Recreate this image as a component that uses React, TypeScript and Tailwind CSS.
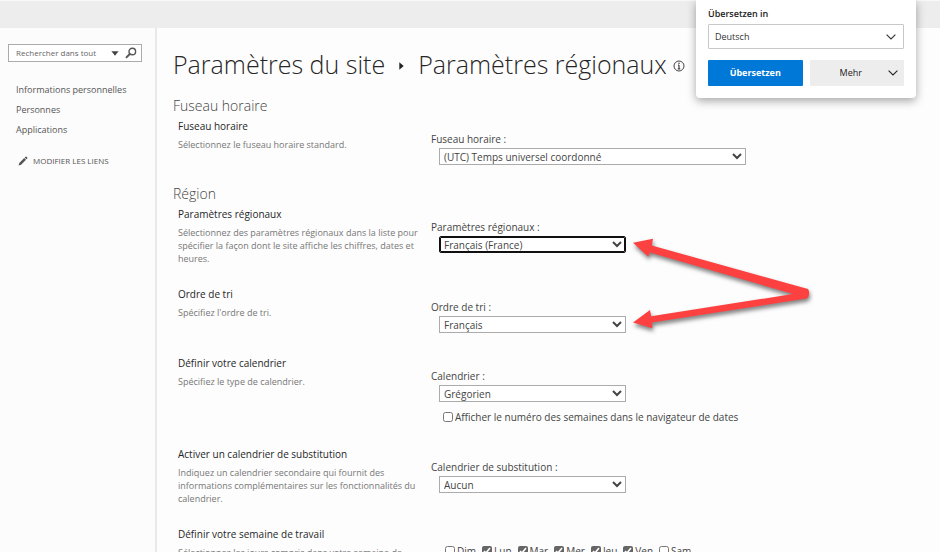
import React, { useState } from "react";

const navLinks = ["Informations personnelles", "Personnes", "Applications"];

const initialDays = [
  { name: "Dim", checked: false },
  { name: "Lun", checked: true },
  { name: "Mar", checked: true },
  { name: "Mer", checked: true },
  { name: "Jeu", checked: true },
  { name: "Ven", checked: true },
  { name: "Sam", checked: false },
];

const SearchIcon = () => (
  <svg viewBox="0 0 12 12" className="h-3 w-3" fill="none" stroke="#555">
    <circle cx="7.3" cy="4.5" r="3.3" strokeWidth="1.4" />
    <path d="M4.8 7L1 10.8" strokeWidth="1.9" />
  </svg>
);

const PencilIcon = () => (
  <svg viewBox="0 0 10 10" className="h-2.5 w-2.5" fill="#555">
    <path d="M0.6 9.4L1.3 6.9L6.2 2L8 3.8L3.1 8.7Z" />
    <path d="M6.7 1.5L7.5 0.7Q8 0.3 8.5 0.8L9.2 1.5Q9.7 2 9.3 2.5L8.5 3.3Z" />
  </svg>
);

const InfoIcon = () => (
  <svg viewBox="0 0 12 12" className="h-3 w-3" fill="none" stroke="#444">
    <circle cx="6" cy="6" r="5" strokeWidth="1" />
    <path d="M6 5V9M5 5.2H6M4.8 8.8H7.2" strokeWidth="1.2" />
    <circle cx="6" cy="3.3" r="0.8" fill="#444" stroke="none" />
  </svg>
);

const Chevron = () => (
  <svg viewBox="0 0 10 6" className="h-1.5 w-2.5" fill="none" stroke="currentColor" strokeWidth="1.1">
    <path d="M0.6 0.6L5 5L9.4 0.6" />
  </svg>
);

type FieldProps = {
  id: string;
  label: string;
  options: string[];
  wide?: boolean;
  focused?: boolean;
};

const SelectField = ({ id, label, options, wide, focused }: FieldProps) => (
  <div className="flex flex-col items-start pt-[13px]">
    <label htmlFor={id} className="text-[10px] leading-4 text-[#444]">{label}</label>
    <select
      id={id}
      className={`mb-px ml-2 mt-px h-[17px] border bg-white text-[10px] text-[#444] ${
        wide ? "w-[307px]" : "w-[187px]"
      } ${
        focused
          ? "rounded-[2px] border-[#101010] outline-1 -outline-offset-2 outline-[#101010]"
          : "rounded-none border-[#ababab]"
      }`}
    >
      {options.map((option) => (
        <option key={option}>{option}</option>
      ))}
    </select>
  </div>
);

type RowProps = {
  title: string;
  description: string;
  children: React.ReactNode;
};

const SettingRow = ({ title, description, children }: RowProps) => (
  <div className="grid grid-cols-[258px_1fr] pb-[21px]">
    <div className="pl-[5px] pr-1">
      <h3 className="text-[10px] leading-4 text-[#262626]">{title}</h3>
      <p className="mt-1 text-[9px] leading-[13px] text-[#777]">{description}</p>
    </div>
    <div>{children}</div>
  </div>
);

const SectionTitle = ({ children }: { children: React.ReactNode }) => (
  <h2 className="pb-[5px] text-[14px] font-light leading-[14px] text-[#444]">{children}</h2>
);

const Sidebar = () => (
  <aside className="w-[157px] shrink-0 border-r-2 border-[#e9e9e9] bg-[#fcfcfc] pt-4">
    <form className="ml-2 mr-[13px] flex h-[18px] items-center border border-[#ababab] bg-white pl-[7px] pr-1">
      <input
        aria-label="Rechercher"
        placeholder="Rechercher dans tout"
        className="min-w-0 flex-1 text-[8px] outline-none placeholder:text-[#666]"
      />
      <button type="button" aria-label="Étendue" className="mr-1.5">
        <svg viewBox="0 0 8 5" className="h-[5px] w-2" fill="#444">
          <path d="M0.4 0.2H7.6L4 4.8Z" />
        </svg>
      </button>
      <button type="button" aria-label="Lancer la recherche">
        <SearchIcon />
      </button>
    </form>
    <nav className="mt-5 flex flex-col gap-1 pl-4 text-[9px] leading-4 text-[#555]">
      {navLinks.map((link) => (
        <a key={link} href="#">{link}</a>
      ))}
    </nav>
    <a href="#" className="mt-[15px] flex items-center gap-[5px] pl-[18px] text-[8px] leading-4 text-[#555]">
      <PencilIcon />
      MODIFIER LES LIENS
    </a>
  </aside>
);

const TranslatePopup = () => (
  <div className="absolute right-6 top-0 w-[220px] rounded-b-[4px] bg-white px-3 pb-3 shadow-[0_3px_10px_rgba(0,0,0,0.35)]">
    <label htmlFor="target" className="block pb-0.5 pt-1.5 text-[9px] font-semibold leading-4 text-[#222]">
      Übersetzen in
    </label>
    <div className="relative flex">
      <select
        id="target"
        className="h-[25px] w-full appearance-none rounded-[1px] border border-[#c8c8c8] pl-1.5 text-[9px] text-[#333]"
      >
        <option>Deutsch</option>
        <option>Français</option>
      </select>
      <span className="pointer-events-none absolute inset-y-0 right-2 flex items-center text-[#333]">
        <Chevron />
      </span>
    </div>
    <div className="mt-[11px] grid grid-cols-2 gap-[7px]">
      <button className="h-[26px] rounded-[1px] bg-[#0078d7] text-[9px] font-bold text-white">Übersetzen</button>
      <button className="relative h-[26px] rounded-[1px] bg-[#ededed] pr-3 text-[9px] text-[#222]">
        Mehr
        <span className="absolute inset-y-0 right-1.5 flex items-center">
          <Chevron />
        </span>
      </button>
    </div>
  </div>
);

// Two red arrows pointing at the locale and sort order lists
const Arrows = () => (
  <svg
    viewBox="0 0 190 110"
    className="pointer-events-none absolute left-[630px] top-[232px] h-[110px] w-[190px] [filter:drop-shadow(1px_3px_2px_rgba(0,0,0,0.5))]"
    fill="#fd4141"
  >
    <path d="M3 10.7L23 6.7L21.8 13.6L178 57Q179.6 59 179 62.5Q179 65 176.5 66.5L22 90.5L22.3 96.3L3 90.5L20 78L21.2 84.3L163 62L19.8 20.5L18.3 24.7Z" />
  </svg>
);

export default function App() {
  const [days, setDays] = useState(initialDays);
  const [showWeeks, setShowWeeks] = useState(false);

  const toggleDay = (name: string) => {
    setDays(days.map((day) => (day.name === name ? { ...day, checked: !day.checked } : day)));
  };

  return (
    <div className="relative flex h-screen flex-col overflow-hidden bg-[#fdfdfd] font-['Open_Sans','Noto_Sans',sans-serif]">
      <header className="h-7 shrink-0 border-t border-[#f8f8f8] bg-[#ededed]" />

      <div className="flex flex-1">
        <Sidebar />

        <main className="flex-1 pl-4 pt-4">
          <h1 className="mb-[15px] flex items-center whitespace-nowrap text-[25px] font-light leading-[40px] text-[#262626]">
            Paramètres du site
            <svg viewBox="0 0 5 8" className="mx-3.5 mt-1 h-2 w-[5px]" fill="#222">
              <path d="M0.3 0.3L4.7 4L0.3 7.7Z" />
            </svg>
            Paramètres régionaux
            <span className="ml-1.5 mt-1">
              <InfoIcon />
            </span>
          </h1>

          <SectionTitle>Fuseau horaire</SectionTitle>
          <SettingRow title="Fuseau horaire" description="Sélectionnez le fuseau horaire standard.">
            <SelectField id="timezone" label="Fuseau horaire :" options={["(UTC) Temps universel coordonné"]} wide />
          </SettingRow>

          <SectionTitle>Région</SectionTitle>
          <SettingRow
            title="Paramètres régionaux"
            description="Sélectionnez des paramètres régionaux dans la liste pour spécifier la façon dont le site affiche les chiffres, dates et heures."
          >
            <SelectField id="locale" label="Paramètres régionaux :" options={["Français (France)"]} focused />
          </SettingRow>
          <SettingRow title="Ordre de tri" description="Spécifiez l'ordre de tri.">
            <SelectField id="sort" label="Ordre de tri :" options={["Français"]} />
          </SettingRow>
          <SettingRow title="Définir votre calendrier" description="Spécifiez le type de calendrier.">
            <SelectField id="calendar" label="Calendrier :" options={["Grégorien"]} />
            <label className="ml-3 mt-1.5 flex items-center gap-0.5 text-[10px] leading-4 text-[#444]">
              <input
                type="checkbox"
                className="h-2.5 w-2.5"
                checked={showWeeks}
                onChange={() => setShowWeeks(!showWeeks)}
              />
              Afficher le numéro des semaines dans le navigateur de dates
            </label>
          </SettingRow>
          <SettingRow
            title="Activer un calendrier de substitution"
            description="Indiquez un calendrier secondaire qui fournit des informations complémentaires sur les fonctionnalités du calendrier."
          >
            <SelectField id="alternate" label="Calendrier de substitution :" options={["Aucun"]} />
          </SettingRow>
          <SettingRow
            title="Définir votre semaine de travail"
            description="Sélectionnez les jours compris dans votre semaine de travail et le premier jour ouvrable."
          >
            <div className="ml-[14px] mt-[17px] flex gap-1.5">
              {days.map((day) => (
                <label key={day.name} className="flex items-center gap-0.5 text-[10px] leading-4 text-[#444]">
                  <input
                    type="checkbox"
                    className="h-2.5 w-2.5 accent-[#666]"
                    checked={day.checked}
                    onChange={() => toggleDay(day.name)}
                  />
                  {day.name}
                </label>
              ))}
            </div>
          </SettingRow>
        </main>
      </div>

      <Arrows />
      <TranslatePopup />
    </div>
  );
}
